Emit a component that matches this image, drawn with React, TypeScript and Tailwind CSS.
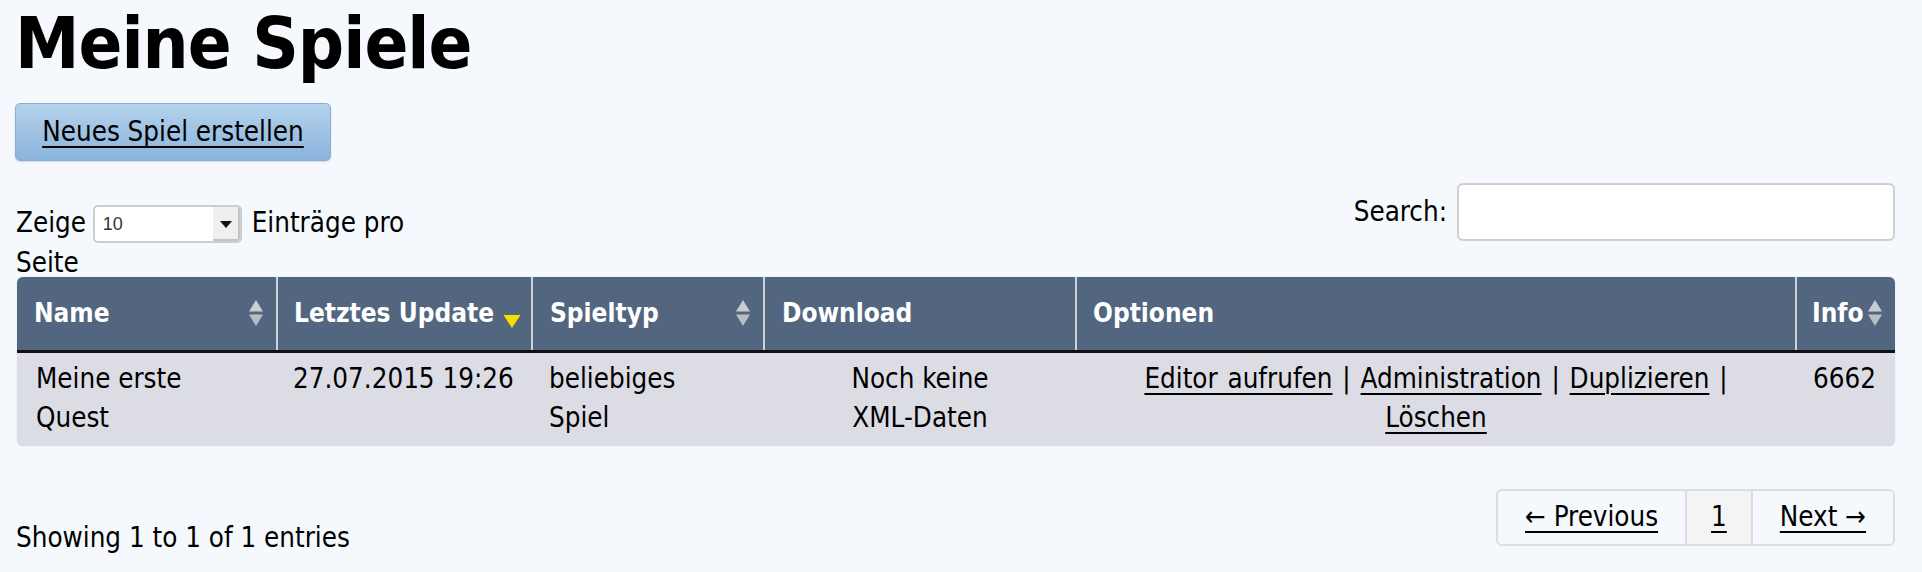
import React from "react";

const SortBoth = () => (
  <svg width="18" height="28" viewBox="0 0 18 28" className="shrink-0">
    <path d="M9 1 L16 12.5 L2 12.5 Z" fill="#c9cdd2" />
    <path d="M2 15.5 L16 15.5 L9 27 Z" fill="#b9bdc3" />
  </svg>
);

const SortDesc = () => (
  <svg width="18" height="15" viewBox="0 0 18 15" className="shrink-0 mt-[16px]">
    <path d="M0.5 1 L17.5 1 L9 14 Z" fill="#f4de00" />
  </svg>
);

const link = "underline underline-offset-[5px] decoration-[2px]";

const App = () => {
  return (
    <div className="min-h-screen bg-[#f5f8fc] pl-[16px] pr-[27px] text-black font-['DejaVu_Sans_Condensed','DejaVu_Sans',sans-serif] font-stretch-condensed text-[27.5px]">
      <h1 className="pt-[7px] text-[72px] font-bold leading-none tracking-[-1px] -ml-[1px]">Meine Spiele</h1>

      <button className="mt-[24px] -ml-[1px] h-[58px] w-[316px] rounded-[5px] border border-[#86add5] bg-gradient-to-b from-[#b5d2ec] to-[#8ab4dc] shadow-[0_1px_2px_rgba(0,0,0,0.12)]">
        <span className={link}>Neues Spiel erstellen</span>
      </button>

      {/* controls */}
      <div className="mt-[22px] flex h-[94px] items-start justify-between">
        <div className="mt-[20px] w-[420px] leading-[39px]">
          Zeige{" "}
          <span className="inline-flex h-[38px] w-[149px] align-middle items-stretch overflow-hidden rounded-[5px] border-2 border-[#cdcdcd] bg-white -ml-[1px] mr-[2px]">
            <span className="flex-1 pl-[8px] font-['Liberation_Sans',sans-serif] text-[18px] leading-[34px] text-[#333]">10</span>
            <span className="flex w-[27px] items-center justify-center bg-[#efefef] shadow-[inset_-2px_-2px_0_#c4c4c4]">
              <svg width="12" height="7" viewBox="0 0 12 7">
                <path d="M0 0 L12 0 L6 7 Z" fill="#111" />
              </svg>
            </span>
          </span>{" "}
          Einträge pro Seite
        </div>
        <div className="flex items-center gap-[10px]">
          <span>Search:</span>
          <input className="h-[58px] w-[438px] rounded-[6px] border-2 border-[#cfcfd2] bg-white outline-none" />
        </div>
      </div>

      {/* table */}
      <div className="relative ml-[1px] overflow-hidden rounded-[6px] bg-[#dcdde4] shadow-[0_0_1px_rgba(0,0,0,0.25)]">
        <table className="w-full table-fixed border-collapse">
          <colgroup>
            <col className="w-[260px]" />
            <col className="w-[255px]" />
            <col className="w-[232px]" />
            <col className="w-[312px]" />
            <col className="w-[720px]" />
            <col className="w-[99px]" />
          </colgroup>
          <thead>
            <tr className="h-[74px] bg-[#52677f] text-white font-bold text-[26px] border-b-[3px] border-[#111]">
              <th className="pl-[17px] pr-[11px] text-left font-bold border-r-2 border-[#cfd3d9]">
                <div className="flex items-center justify-between">
                  <span>Name</span>
                  <SortBoth />
                </div>
              </th>
              <th className="pl-[16px] pr-[10px] text-left font-bold border-r-2 border-[#cfd3d9]">
                <div className="flex items-center justify-between">
                  <span>Letztes Update</span>
                  <SortDesc />
                </div>
              </th>
              <th className="pl-[17px] pr-[11px] text-left font-bold border-r-2 border-[#cfd3d9]">
                <div className="flex items-center justify-between">
                  <span>Spieltyp</span>
                  <SortBoth />
                </div>
              </th>
              <th className="pl-[17px] text-left font-bold border-r-2 border-[#cfd3d9]">Download</th>
              <th className="pl-[16px] text-left font-bold border-r-2 border-[#cfd3d9]">Optionen</th>
              <th className="pl-[15px] pr-[4px] text-left font-bold">
                <div className="flex items-center gap-[2px]">
                  <span>Info</span>
                  <SortBoth />
                </div>
              </th>
            </tr>
          </thead>
          <tbody>
            <tr className="align-top leading-[39px]">
              <td className="pl-[19px] pr-[18px] pt-[6px] pb-[9px]">
                Meine erste
                <br />
                Quest
              </td>
              <td className="pl-[16px] pr-[6px] pt-[6px] pb-[9px] whitespace-nowrap">27.07.2015 19:26</td>
              <td className="pl-[17px] pr-[18px] pt-[6px] pb-[9px]">
                beliebiges
                <br />
                Spiel
              </td>
              <td className="px-[20px] pt-[6px] pb-[9px] text-center">
                Noch keine
                <br />
                XML-Daten
              </td>
              <td className="px-[18px] pt-[6px] pb-[9px] text-center [word-spacing:2px]">
                <a href="#" className={link}>Editor aufrufen</a> |{" "}
                <a href="#" className={link}>Administration</a> |{" "}
                <a href="#" className={link}>Duplizieren</a> |
                <br />
                <a href="#" className={link}>Löschen</a>
              </td>
              <td className="pl-[17px] pt-[6px] pb-[9px]">6662</td>
            </tr>
          </tbody>
        </table>
      </div>

      {/* footer */}
      <div className="mt-[43px] flex items-start justify-between">
        <div className="pt-[29px] leading-[39px]">Showing 1 to 1 of 1 entries</div>
        <div className="flex h-[57px] overflow-hidden rounded-[6px] border-2 border-[#dcdde0]">
          <a href="#" className={`flex items-center px-[27px] border-r-2 border-[#dcdde0] ${link}`}>
            ← Previous
          </a>
          <a href="#" className={`flex items-center px-[24px] bg-[#f4f4f4] border-r-2 border-[#dcdde0] ${link}`}>
            1
          </a>
          <a href="#" className={`flex items-center px-[27px] ${link}`}>
            Next →
          </a>
        </div>
      </div>
    </div>
  );
};

export default App;
